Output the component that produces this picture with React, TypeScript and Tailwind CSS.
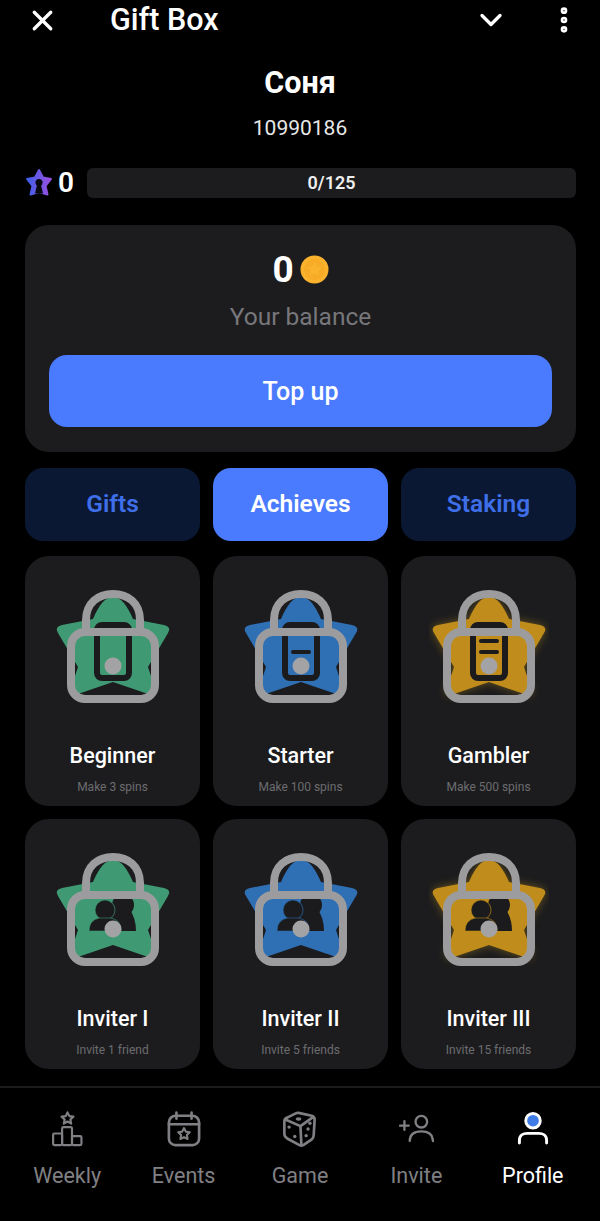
import React from 'react';
import { X, ChevronDown, EllipsisVertical } from 'lucide-react';

interface Achieve {
  title: string;
  sub: string;
  kind: 'phone0' | 'phone1' | 'phone2' | 'people';
  color: string;
  glow?: boolean;
}

const achieves: Achieve[] = [
  { title: 'Beginner', sub: 'Make 3 spins', kind: 'phone0', color: '#3f9a74' },
  { title: 'Starter', sub: 'Make 100 spins', kind: 'phone1', color: '#2f6fb3' },
  { title: 'Gambler', sub: 'Make 500 spins', kind: 'phone2', color: '#c08d1c', glow: true },
  { title: 'Inviter I', sub: 'Invite 1 friend', kind: 'people', color: '#3f9a74' },
  { title: 'Inviter II', sub: 'Invite 5 friends', kind: 'people', color: '#2f6fb3' },
  { title: 'Inviter III', sub: 'Invite 15 friends', kind: 'people', color: '#c08d1c', glow: true },
];

const STAR =
  'M60 10C68 10 74 18 80 32L111 38Q119 40 115 46L95 80L103 104Q104 110 98 108L60 95L22 108Q16 110 17 104L25 80L5 46Q1 40 9 38L40 32C46 18 52 10 60 10Z';

const LockedBadge = ({ item }: { item: Achieve }) => {
  const dark = '#1b1b1d';
  return (
    <svg width="120" height="120" viewBox="0 0 120 120" fill="none">
      <path
        d={STAR}
        fill={item.color}
        className={item.glow ? 'drop-shadow-[0_0_5px_rgba(220,170,30,0.4)]' : ''}
      />
      {item.kind !== 'people' && (
        <>
          <rect x="44" y="38" width="32" height="53" rx="5" stroke={dark} strokeWidth="6" />
          {item.kind === 'phone1' && <rect x="50" y="63" width="20" height="4" rx="2" fill={dark} />}
          {item.kind === 'phone2' && (
            <>
              <rect x="50" y="52" width="20" height="4" rx="2" fill={dark} />
              <rect x="50" y="63" width="20" height="4" rx="2" fill={dark} />
            </>
          )}
        </>
      )}
      {item.kind === 'people' && (
        <>
          <circle cx="70" cy="55" r="11" fill={dark} />
          <path d="M58 58H76Q83 68 83 81H58Z" fill={dark} />
          <circle cx="52" cy="60" r="10" fill={dark} stroke={item.color} strokeOpacity="0.55" strokeWidth="1.200" />
          <path d="M36 81Q36 70 46 68H58Q68 70 68 81Z" fill={dark} stroke={item.color} strokeOpacity="0.55" strokeWidth="1.200" />
        </>
      )}
      <path
        d="M33 45V33C33 16 45 7 60 7C75 7 87 16 87 33V45"
        stroke="#9c9c9e"
        strokeWidth="8"
      />
      <rect x="18" y="45" width="84" height="67" rx="14" stroke="#9c9c9e" strokeWidth="8" />
      <circle cx="60" cy="79" r="8.5" fill="#a3a3a5" />
    </svg>
  );
};

const WeeklyIcon = () => (
  <svg width="33" height="36" viewBox="0 0 36 40" fill="none" stroke="currentColor" strokeWidth="2.400" strokeLinejoin="round">
    <path d="M18 1.500l2 4.200 4.600.6-3.400 3.100.9 4.600-4.100-2.300-4.100 2.300.9-4.600-3.400-3.100 4.600-.6z" />
    <rect x="2" y="25" width="10" height="13" rx="1.500" />
    <rect x="12" y="18" width="11" height="20" rx="1.500" />
    <rect x="23" y="28" width="10.500" height="10" rx="1.500" />
  </svg>
);

const EventsIcon = () => (
  <svg width="34" height="36" viewBox="0 0 36 38" fill="none" stroke="currentColor" strokeWidth="2.800" strokeLinecap="round" strokeLinejoin="round">
    <rect x="2" y="5" width="32" height="31" rx="7" />
    <path d="M2 14H34M10 1.500V8M26 1.500V8" />
    <path
      strokeWidth="2.200"
      d="M18 18l1.900 3.800 4.200.6-3 3 .7 4.200-3.800-2-3.800 2 .7-4.200-3-3 4.200-.6z"
    />
  </svg>
);

const GameIcon = () => (
  <svg width="35" height="36" viewBox="0 0 36 38" fill="none" stroke="currentColor" strokeWidth="2.800" strokeLinejoin="round">
    <path d="M17 2L31 5Q34 6 34 9L33 25Q33 28 31 30L22 36Q20 37 18 36L5 29Q2 27 2 24V11Q2 8 5 7L14 2.500Q15.500 1.800 17 2Z" />
    <path d="M3 9L19 16L33 6M19 16L20 36" />
    <g fill="currentColor" stroke="none">
      <ellipse cx="17" cy="8.500" rx="3" ry="1.800" />
      <circle cx="7" cy="17" r="1.800" />
      <circle cx="13" cy="27" r="1.800" />
      <circle cx="27" cy="19" r="1.800" />
      <circle cx="25" cy="26" r="1.800" />
      <circle cx="29" cy="13" r="1.800" />
    </g>
  </svg>
);

const InviteIcon = () => (
  <svg width="35" height="29" viewBox="0 0 36 30" fill="none" stroke="currentColor" strokeWidth="2.400" strokeLinecap="round" className="ml-[1px] mb-[4px]">
    <circle cx="23" cy="8" r="6" />
    <path d="M11 28C11 21 16 18 23 18C30 18 35 21 35 28" />
    <path d="M1 12H10M5.500 7.500V16.500" />
  </svg>
);

const ProfileIcon = () => (
  <svg width="32" height="33" viewBox="0 0 32 34" fill="none" className="mb-[2px]">
    <circle cx="16" cy="9" r="7.500" fill="#3f7ce8" stroke="#ffffff" strokeWidth="3" />
    <path d="M2 32V29C2 24 6 22 10 22H22C26 22 30 24 30 29V32" stroke="#ffffff" strokeWidth="3" strokeLinecap="round" />
  </svg>
);

const nav = [
  { label: 'Weekly', icon: <WeeklyIcon /> },
  { label: 'Events', icon: <EventsIcon /> },
  { label: 'Game', icon: <GameIcon /> },
  { label: 'Invite', icon: <InviteIcon /> },
  { label: 'Profile', icon: <ProfileIcon />, active: true },
];

export default function App() {
  return (
    <div className="w-[600px] h-[1221px] overflow-hidden bg-black text-white font-['Roboto',sans-serif] flex flex-col">
      {/* app bar */}
      <div className="h-[40px] flex items-center shrink-0">
        <X className="ml-[26px] w-[33px] h-[33px]" strokeWidth={2.4} />
        <div className="ml-[51px] text-[30.500px] font-medium leading-none">Gift Box</div>
        <ChevronDown className="ml-auto w-[36px] h-[36px]" strokeWidth={2.2} />
        <EllipsisVertical className="ml-[39px] mr-[20px] w-[32px] h-[32px]" strokeWidth={3} />
      </div>

      <div className="mt-[24px] text-center text-[30.500px] font-bold leading-[38px]">Соня</div>
      <div className="mt-[12px] text-center text-[21px] leading-[28px] text-[#e8e8e8]">10990186</div>

      {/* level */}
      <div className="mt-[26px] ml-[25px] w-[551px] flex items-center h-[30px]">
        <svg width="28" height="30" viewBox="0 0 28 30" className="shrink-0">
          <defs>
            <linearGradient id="lvl" x1="0" y1="0" x2="1" y2="0">
              <stop offset="0" stopColor="#3f5fe8" />
              <stop offset="1" stopColor="#9a4fe0" />
            </linearGradient>
          </defs>
          <path
            fill="url(#lvl)"
            stroke="url(#lvl)"
            strokeWidth="2"
            strokeLinejoin="round"
            d="M14 2L18 9.500L26 11L20.500 18L22.500 26.500L14 24L5.500 26.500L7.500 18L2 11L10 9.500Z"
          />
          <circle cx="14" cy="14.500" r="3.500" fill="#08080f" />
          <path d="M12.500 15H15.500L18 25.500H10Z" fill="#08080f" />
        </svg>
        <div className="ml-[3px] w-[20px] text-[28px] font-semibold leading-none text-center">0</div>
        <div className="ml-[11px] flex-1 h-[30px] rounded-md bg-[#1c1c1e] flex items-center justify-center pb-[2px] text-[18px] font-semibold text-[#eeeeee]">
          0/125
        </div>
      </div>

      {/* balance */}
      <div className="mt-[27px] ml-[25px] w-[551px] h-[227px] rounded-[24px] bg-[#1c1c1e] px-[24px] pt-[21px] flex flex-col items-center shrink-0">
        <div className="flex items-center gap-[6px] h-[46px]">
          <span className="text-[37px] font-bold leading-none">0</span>
          <svg width="29" height="29" viewBox="0 0 29 29">
            <circle cx="14.500" cy="14.500" r="14" fill="#fbb32e" />
            <circle cx="14.500" cy="14.500" r="10.500" fill="#f7ab26" />
            <path d="M14.500 7l2.300 4.700 5.200.7-3.800 3.600.9 5.100-4.600-2.500-4.600 2.500.9-5.100-3.800-3.600 5.200-.7z" fill="#fbb32e" />
          </svg>
        </div>
        <div className="mt-[10px] text-[24.500px] leading-[30px] text-[#77777b]">Your balance</div>
        <button className="mt-[23px] w-full h-[72px] rounded-[18px] bg-[#4a7bff] pt-[1px] text-[25px] font-medium text-white">
          Top up
        </button>
      </div>

      {/* tabs */}
      <div className="mt-[16px] ml-[25px] w-[551px] grid grid-cols-3 gap-[13px] shrink-0">
        <div className="h-[73px] rounded-[18px] bg-[#0a1833] flex items-center justify-center text-[24.500px] font-semibold text-[#3f6fe8]">Gifts</div>
        <div className="h-[73px] rounded-[18px] bg-[#4a7bff] flex items-center justify-center text-[24.500px] font-semibold text-white">Achieves</div>
        <div className="h-[73px] rounded-[18px] bg-[#0a1833] flex items-center justify-center text-[24.500px] font-semibold text-[#3f6fe8]">Staking</div>
      </div>

      {/* achievements */}
      <div className="mt-[15px] ml-[25px] w-[551px] grid grid-cols-3 gap-[13px] shrink-0">
        {achieves.map((a) => (
          <div key={a.title} className="h-[250px] rounded-[24px] bg-[#1c1c1e] flex flex-col items-center pt-[31px]">
            <LockedBadge item={a} />
            <div className="mt-[34px] text-[21.500px] font-medium leading-[30px]">{a.title}</div>
            <div className="mt-[7px] text-[12px] leading-[18px] text-[#6c6c70]">{a.sub}</div>
          </div>
        ))}
      </div>

      {/* bottom nav */}
      <div className="mt-[17px] flex-1 border-t-[2px] border-[#1c1c1e] grid grid-cols-5 px-[9px]">
        {nav.map((n) => (
          <div key={n.label} className={'flex flex-col items-center ' + (n.active ? 'text-white' : 'text-[#808084]')}>
            <div className="h-[44px] mt-[15px] flex items-end justify-center">{n.icon}</div>
            <div className="mt-[14px] text-[21.500px] leading-[30px]">{n.label}</div>
          </div>
        ))}
      </div>
    </div>
  );
}
